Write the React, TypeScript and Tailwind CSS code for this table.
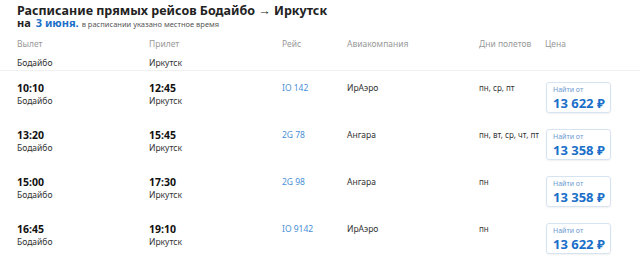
import React from 'react'

const rows = [
  { dep: '10:10', arr: '12:45', flight: 'IO 142', airline: 'ИрАэро', days: 'пн, ср, пт', price: '13 622 ₽' },
  { dep: '13:20', arr: '15:45', flight: '2G 78', airline: 'Ангара', days: 'пн, вт, ср, чт, пт', price: '13 358 ₽' },
  { dep: '15:00', arr: '17:30', flight: '2G 98', airline: 'Ангара', days: 'пн', price: '13 358 ₽' },
  { dep: '16:45', arr: '19:10', flight: 'IO 9142', airline: 'ИрАэро', days: 'пн', price: '13 622 ₽' },
]

export default function App() {
  return (
    <div className="h-[261px] w-[640px] overflow-hidden bg-white font-['Noto_Sans',sans-serif] text-[#222]">
      <div className="px-[17px] pt-[5px]">
        <h1 className="text-[12.5px] font-bold leading-[12px]">Расписание прямых рейсов Бодайбо → Иркутск</h1>
        <div className="flex h-[11px] items-baseline leading-[11px]">
          <span className="text-[11px] font-bold">на</span>
          <span className="ml-[5px] text-[11px] font-bold text-[#1a6fc9]">3 июня.</span>
          <span className="ml-[3px] text-[7.5px] text-[#555]">в расписании указано местное время</span>
        </div>
      </div>

      <div className="mt-[9px] grid grid-cols-[132px_133px_65px_132px_66px_1fr] px-[17px] text-[8.5px] leading-[14px] text-[#999]">
        <span>Вылет</span>
        <span>Прилет</span>
        <span>Рейс</span>
        <span>Авиакомпания</span>
        <span>Дни полетов</span>
        <span>Цена</span>
      </div>
      <div className="mt-[5px] grid grid-cols-[132px_1fr] border-b border-[#f0f0f0] px-[17px] text-[8.5px] leading-[14px] text-[#333]">
        <span>Бодайбо</span>
        <span>Иркутск</span>
      </div>

      <div className="pt-[9px]">
        {rows.map((r) => (
          <div
            key={r.dep}
            className="grid h-[47px] grid-cols-[132px_133px_65px_132px_66px_1fr] px-[17px]"
          >
            <div className="pt-[1px]">
              <div className="text-[10.5px] font-bold leading-[14px] text-[#111]">{r.dep}</div>
              <div className="-mt-[1px] text-[8.5px] leading-[13px] text-[#333]">Бодайбо</div>
            </div>
            <div className="pt-[1px]">
              <div className="text-[10.5px] font-bold leading-[14px] text-[#111]">{r.arr}</div>
              <div className="-mt-[1px] text-[8.5px] leading-[13px] text-[#333]">Иркутск</div>
            </div>
            <div className="pt-[1px] text-[8.5px] leading-[14px] text-[#4a8fd6]">{r.flight}</div>
            <div className="pt-[1px] text-[8.5px] leading-[14px] text-[#333]">{r.airline}</div>
            <div className="pt-[1px]">
              <div className="max-w-[60px] overflow-hidden whitespace-nowrap text-[8px] leading-[14px] text-[#333]">{r.days}</div>
            </div>
            <div>
              <div className="mt-[2px] ml-[1px] h-[31px] w-[65px] rounded-[3px] border border-[#d6e3f1] pl-[6px] pt-[2px] shadow-[0_1px_2px_rgba(0,0,0,0.06)]">
                <div className="text-[7px] leading-[10px] text-[#6b9ad0]">Найти от</div>
                <div className="mt-[1px] whitespace-nowrap text-[13px] font-bold leading-[14px] text-[#1a6fc9]">{r.price}</div>
              </div>
            </div>
          </div>
        ))}
      </div>
    </div>
  )
}
